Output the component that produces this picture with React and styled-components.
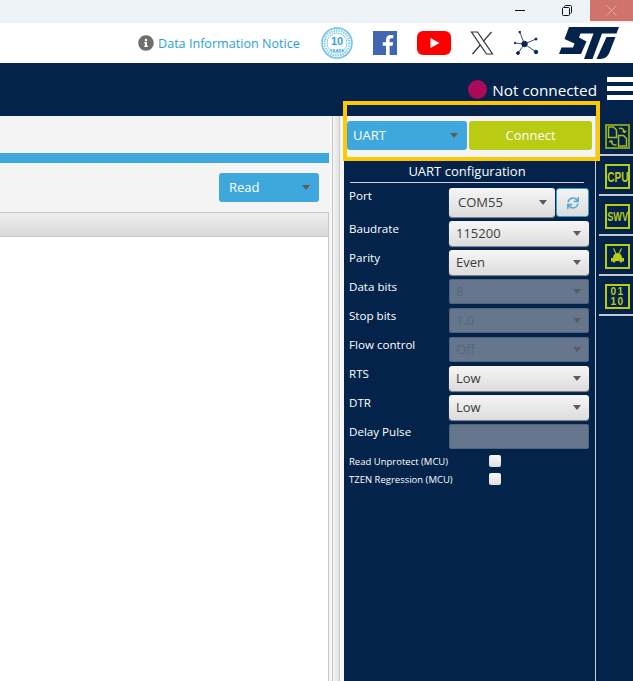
import React from "react";
import styled, { createGlobalStyle } from "styled-components";
import { FaSync, FaInfoCircle } from "react-icons/fa";

const GlobalStyle = createGlobalStyle`
  html, body {
    margin: 0;
    padding: 0;
    background: #fff;
  }
  body {
    font-family: "Open Sans", "Noto Sans", "Liberation Sans", sans-serif;
  }
`;

const Page = styled.div`
  position: relative;
  width: 633px;
  height: 681px;
  overflow: hidden;
  display: flex;
  flex-direction: column;
`;

const TitleBar = styled.div`
  height: 23px;
  flex: none;
  background: #eef3f7;
  display: flex;
  justify-content: flex-end;
`;

const WinButton = styled.div`
  width: ${(props) => props.$width}px;
  height: 21px;
  display: flex;
  align-items: center;
  justify-content: center;
  background: ${(props) => (props.$close ? "#d0736b" : "transparent")};
`;

const TopBar = styled.div`
  height: 40px;
  flex: none;
  background: #fff;
  display: flex;
  align-items: center;
  padding: 0 13px 0 138px;
  box-sizing: border-box;
`;

const Notice = styled.div`
  display: flex;
  align-items: center;
  gap: 4px;
  width: 183px;
  color: #2a9fd8;
  font-size: 12.6px;
  white-space: nowrap;
  svg {
    color: #6e6e6e;
    flex: none;
  }
`;

const Socials = styled.div`
  flex: 1;
  display: flex;
  align-items: center;
  justify-content: space-between;
`;

const StatusBar = styled.div`
  height: 53px;
  flex: none;
  background: #03234b;
  display: flex;
  justify-content: flex-end;
  padding-top: 14px;
  box-sizing: border-box;
`;

const StatusDot = styled.div`
  width: 19px;
  height: 19px;
  margin-top: 3px;
  border-radius: 50%;
  background: #ab0a5b;
`;

const StatusText = styled.div`
  margin: 2px 10px 0 5px;
  color: #fff;
  font-size: 15.3px;
  line-height: 22px;
  white-space: nowrap;
`;

const Burger = styled.div`
  width: 26px;
  height: 23px;
  display: flex;
  flex-direction: column;
  justify-content: space-between;
  span {
    height: 5px;
    background: #fff;
  }
`;

const Body = styled.div`
  flex: 1;
  display: flex;
  min-height: 0;
`;

const Content = styled.div`
  width: 329px;
  flex: none;
  background: #f4f4f4;
  display: flex;
  flex-direction: column;
  padding-top: 37px;
  box-sizing: border-box;
`;

const BlueStrip = styled.div`
  height: 10px;
  background: #3ea8dc;
`;

const ReadRow = styled.div`
  height: 49px;
  flex: none;
  display: flex;
  justify-content: flex-end;
  padding: 10px 10px 0 0;
  box-sizing: border-box;
`;

const BlueSelect = styled.div`
  width: ${(props) => props.$width}px;
  height: 29px;
  background: #3ea8dc;
  border-radius: 3px;
  color: #fff;
  font-size: 13px;
  display: flex;
  align-items: center;
  justify-content: space-between;
  padding: 0 9px 2px ${(props) => props.$pad}px;
  box-sizing: border-box;
`;

const Arrow = styled.span`
  width: 0;
  height: 0;
  margin-top: 2px;
  border-left: 4.5px solid transparent;
  border-right: 4.5px solid transparent;
  border-top: 5px solid #5c5c5c;
`;

const TableHead = styled.div`
  height: 25px;
  flex: none;
  box-sizing: border-box;
  border: 1px solid #c6c6c6;
  border-left: none;
  background: linear-gradient(#efefef, #d8d8d8);
`;

const TableBody = styled.div`
  flex: 1;
  background: #fff;
  border-right: 1px solid #c6c6c6;
`;

const Splitter = styled.div`
  width: 15px;
  flex: none;
  box-sizing: border-box;
  padding-left: 3px;
  background: #f6f6f6;
`;

const SplitterGrip = styled.div`
  width: 8px;
  height: 100%;
  box-sizing: border-box;
  border-left: 1px solid #c8c8c8;
  border-right: 1px solid #c8c8c8;
  background: linear-gradient(90deg, #f4f4f4, #e2e2e2);
`;

const Panel = styled.div`
  width: 251px;
  flex: none;
  background: #03234b;
  display: flex;
  flex-direction: column;
`;

const ConnectBand = styled.div`
  height: 41px;
  flex: none;
  background: #f4f4f4;
  display: flex;
  gap: 2px;
  padding: 5px 3px 0 3px;
  box-sizing: border-box;
`;

const ConnectButton = styled.div`
  width: 123px;
  height: 29px;
  border-radius: 3px;
  background: #b9cc12;
  color: #fff;
  font-size: 13px;
  padding-bottom: 2px;
  box-sizing: border-box;
  display: flex;
  align-items: center;
  justify-content: center;
`;

const ConfigTitle = styled.div`
  margin: 6px 11px 0 6px;
  height: 19px;
  line-height: 17px;
  border-bottom: 1px solid #c8d0da;
  color: #fff;
  font-size: 13px;
  text-align: center;
`;

const Form = styled.div`
  display: grid;
  grid-template-columns: 100px 1fr;
  grid-auto-rows: 29px;
  padding: 7px 6px 0 5px;
`;

const FieldLabel = styled.div`
  color: #fff;
  font-size: 11.6px;
  line-height: 16px;
  margin-top: ${(props) => props.$offset}px;
`;

const ComboWrap = styled.div`
  display: flex;
  gap: 1px;
`;

const Combo = styled.div`
  flex: 1;
  height: ${(props) => (props.$tall ? 29 : 25)}px;
  margin-top: ${(props) => (props.$tall ? -2 : 2)}px;
  box-sizing: border-box;
  border-radius: 3px;
  display: flex;
  align-items: center;
  justify-content: space-between;
  padding: 0 8px 2px ${(props) => (props.$tall ? 9 : 7)}px;
  font-size: 13px;
  color: ${(props) => (props.$disabled ? "#53667f" : "#3c3c3c")};
  background: ${(props) =>
    props.$disabled ? "#65768d" : "linear-gradient(#f6f6f6, #dcdcdc)"};
  box-shadow: ${(props) =>
    props.$disabled ? "0 0 0 1px #51647d inset" : "0 1px 1px #8c8c8c"};
`;

const RefreshButton = styled.div`
  width: 33px;
  height: 29px;
  margin-top: -2px;
  box-sizing: border-box;
  border: 1px solid #2a9fd8;
  border-radius: 3px;
  background: linear-gradient(#f4f4f4, #dcdcdc);
  color: #5aa8d8;
  display: flex;
  align-items: center;
  justify-content: center;
`;

const CheckList = styled.div`
  margin-top: 1px;
  padding-left: 5px;
  display: grid;
  grid-template-columns: 140px 12px;
  grid-auto-rows: 18px;
  align-items: center;
`;

const CheckLabel = styled.div`
  color: #fff;
  font-size: 9.5px;
  white-space: nowrap;
`;

const CheckBox = styled.div`
  width: 12px;
  height: 12px;
  border-radius: 2px;
  background: linear-gradient(#f8f8f8, #dedede);
`;

const Rail = styled.div`
  flex: 1;
  background: #03234b;
  border-left: 1px solid #c8d0da;
  display: flex;
  flex-direction: column;
  padding-left: 3px;
`;

const RailItem = styled.div`
  height: 40px;
  flex: none;
  box-sizing: border-box;
  border-bottom: 2px solid #c4c9d0;
  padding: 8px 0 0 6px;
`;

const RailBox = styled.div`
  width: 25px;
  height: 25px;
  box-sizing: border-box;
  border: 2px solid ${(props) => (props.$dim ? "#7f9a1f" : "#b9cc12")};
  color: #b9cc12;
  font-family: "Liberation Sans", sans-serif;
  font-weight: 700;
  display: flex;
  align-items: center;
  justify-content: center;
  text-align: center;
`;

const RailText = styled.span`
  font-size: ${(props) => props.$size}px;
  line-height: ${(props) => props.$line || 14}px;
  letter-spacing: ${(props) => props.$spacing || 0}px;
  transform: scaleX(${(props) => props.$squeeze || 1});
`;

const Highlight = styled.div`
  position: absolute;
  left: 343px;
  top: 101px;
  width: 257px;
  height: 60px;
  box-sizing: border-box;
  border: 4px solid #ffc800;
`;

const Badge = () => (
  <svg width="32" height="32" viewBox="0 0 32 32">
    <circle cx="16" cy="16" r="15" fill="#fff" stroke="#6cc1e8" strokeWidth="1.500" />
    <circle cx="16" cy="16" r="12.500" fill="none" stroke="#8ed0ee" strokeWidth="2.500" strokeDasharray="1.500 1" />
    <circle cx="16" cy="16" r="10" fill="#fff" stroke="#6cc1e8" strokeWidth="0.800" />
    <text x="16" y="17.500" textAnchor="middle" fontSize="11" fontWeight="700" fill="#35a4dc" fontFamily="Liberation Sans">
      10
    </text>
    <text x="16" y="24.500" textAnchor="middle" fontSize="4" fontWeight="700" fill="#35a4dc" fontFamily="Liberation Sans">
      YEARS
    </text>
  </svg>
);

const Facebook = () => (
  <svg width="24" height="24" viewBox="0 0 24 24">
    <rect width="24" height="24" fill="#4267b2" />
    <path
      d="M16.6 24v-9.2h3l.5-3.6h-3.5V9c0-1 .3-1.8 1.8-1.8h1.9V4c-.3 0-1.4-.1-2.7-.1-2.8 0-4.6 1.7-4.6 4.7v2.6H9.800v3.600h3.200V24z"
      fill="#fff"
    />
  </svg>
);

const YouTube = () => (
  <svg width="34" height="24" viewBox="0 0 34 24">
    <rect width="34" height="24" rx="6" fill="#f00" />
    <path d="M13.500 7l9 5-9 5z" fill="#fff" />
  </svg>
);

const XLogo = () => (
  <svg width="24" height="24" viewBox="0 0 24 24" fill="none" stroke="#333" strokeWidth="1.200">
    <path d="M1.500 1H7.500L22.500 23H16.500Z" />
    <path d="M21.500 1L13.300 10.300M10.300 14L2.500 23" />
  </svg>
);

const Network = () => (
  <svg width="25" height="24" viewBox="0 0 25 24" fill="#03234b" stroke="#03234b" strokeWidth="0.800">
    <path d="M10.500 13L5.700 1M10.500 13L22 8M10.500 13L22 21M10.500 13L1 12M10.500 13L4 22" fill="none" />
    <circle cx="10.500" cy="13" r="2.800" />
    <circle cx="5.700" cy="1" r="0.900" />
    <circle cx="22" cy="8" r="1.100" />
    <circle cx="22" cy="21" r="1.800" />
    <circle cx="1" cy="12" r="0.800" />
    <circle cx="4" cy="22" r="1.500" />
  </svg>
);

const StLogo = () => (
  <svg width="61" height="32" viewBox="0 0 61 32" fill="#03234b">
    <path d="M10 0H60L57.500 6.500H43L33.500 32H25L34.500 6.500H21.500L20 10.500L27.500 14.500L22 27H0L2.500 20.500H14L15.500 16.500L5.500 12Z" />
    <path d="M47.500 10H56.500L51 24C49.500 29 46 32 41 32H37.500Z" />
  </svg>
);

const FilesIcon = () => (
  <svg width="21" height="21" viewBox="0 0 21 21" fill="none" stroke="#a8bb1a" strokeWidth="1.500">
    <path d="M1.500 1H6.500L9.500 4V11.500H1.500Z" />
    <path d="M11.500 9.500H16.500L19.500 12.500V20H11.500Z" />
    <path d="M12 2.500C15 1.500 17 3 17.500 6.500M17.500 6.500L15.500 5M17.500 6.500L19.300 4.800" />
    <path d="M9.500 19C6.500 19.500 4.500 18 4 14.500M4 14.500L2.200 16.300M4 14.500L5.800 16.200" />
  </svg>
);

const BugIcon = () => (
  <svg width="19" height="19" viewBox="0 0 19 19" fill="#b9cc12">
    <path d="M5.500 1.500L8 6.500M13.500 1.500L11 6.500" fill="none" stroke="#b9cc12" strokeWidth="1.200" />
    <path d="M5 15.500V11C5 8 7 6 9.500 6S14 8 14 11V15.500H12L11.500 14H7.500L7 15.500Z" />
    <path d="M3 11H5V14.500H3ZM14 11H16V14.500H14Z" />
  </svg>
);

const fields = [
  { label: "Baudrate", value: "115200", offset: 2 },
  { label: "Parity", value: "Even", offset: 2 },
  { label: "Data bits", value: "8", offset: 2, disabled: true },
  { label: "Stop bits", value: "1.0", offset: 2, disabled: true },
  { label: "Flow control", value: "Off", offset: 2, disabled: true },
  { label: "RTS", value: "Low", offset: 2 },
  { label: "DTR", value: "Low", offset: 2 },
];

const rail = [
  { content: <FilesIcon />, dim: true },
  { content: <RailText $size={14} $squeeze={0.72}>CPU</RailText> },
  { content: <RailText $size={12} $squeeze={0.76}>SWV</RailText> },
  { content: <BugIcon /> },
  { content: <RailText $size={10} $line={10} $spacing={1.500}>01<br />10</RailText> },
];

const App = () => (
  <Page>
    <GlobalStyle />
    <TitleBar>
      <WinButton $width={46}>
        <svg width="10" height="2"><rect width="10" height="1" fill="#111" /></svg>
      </WinButton>
      <WinButton $width={47}>
        <svg width="10" height="11" fill="none" stroke="#111">
          <path d="M2.500 2.500V1.500C2.500 1 3 .5 3.500 .5H8.500C9 .5 9.500 1 9.500 1.500V7.500C9.500 8 9 8.500 8.500 8.500" />
          <rect x=".5" y="2.500" width="7" height="8" rx="1" />
        </svg>
      </WinButton>
      <WinButton $width={43} $close>
        <svg width="11" height="11" stroke="#e6aaa5"><path d="M.5 .5L10.500 10.500M10.500 .5L.5 10.500" /></svg>
      </WinButton>
    </TitleBar>
    <TopBar>
      <Notice>
        <FaInfoCircle size={16} />
        Data Information Notice
      </Notice>
      <Socials>
        <Badge />
        <Facebook />
        <YouTube />
        <XLogo />
        <Network />
        <StLogo />
      </Socials>
    </TopBar>
    <StatusBar>
      <StatusDot />
      <StatusText>Not connected</StatusText>
      <Burger>
        <span />
        <span />
        <span />
      </Burger>
    </StatusBar>
    <Body>
      <Content>
        <BlueStrip />
        <ReadRow>
          <BlueSelect $width={100} $pad={10}>
            Read
            <Arrow />
          </BlueSelect>
        </ReadRow>
        <TableHead />
        <TableBody />
      </Content>
      <Splitter>
        <SplitterGrip />
      </Splitter>
      <Panel>
        <ConnectBand>
          <BlueSelect $width={120} $pad={6}>
            UART
            <Arrow />
          </BlueSelect>
          <ConnectButton>Connect</ConnectButton>
        </ConnectBand>
        <ConfigTitle>UART configuration</ConfigTitle>
        <Form>
          <FieldLabel $offset={-2}>Port</FieldLabel>
          <ComboWrap>
            <Combo $tall>
              COM55
              <Arrow />
            </Combo>
            <RefreshButton>
              <FaSync size={12} />
            </RefreshButton>
          </ComboWrap>
          {fields.map((field) => (
            <React.Fragment key={field.label}>
              <FieldLabel $offset={field.offset}>{field.label}</FieldLabel>
              <ComboWrap>
                <Combo $disabled={field.disabled}>
                  {field.value}
                  <Arrow />
                </Combo>
              </ComboWrap>
            </React.Fragment>
          ))}
          <FieldLabel $offset={2}>Delay Pulse</FieldLabel>
          <ComboWrap>
            <Combo $disabled />
          </ComboWrap>
        </Form>
        <CheckList>
          <CheckLabel>Read Unprotect (MCU)</CheckLabel>
          <CheckBox />
          <CheckLabel>TZEN Regression (MCU)</CheckLabel>
          <CheckBox />
        </CheckList>
      </Panel>
      <Rail>
        {rail.map((item, index) => (
          <RailItem key={index}>
            <RailBox $dim={item.dim}>{item.content}</RailBox>
          </RailItem>
        ))}
      </Rail>
    </Body>
    <Highlight />
  </Page>
);

export default App;
